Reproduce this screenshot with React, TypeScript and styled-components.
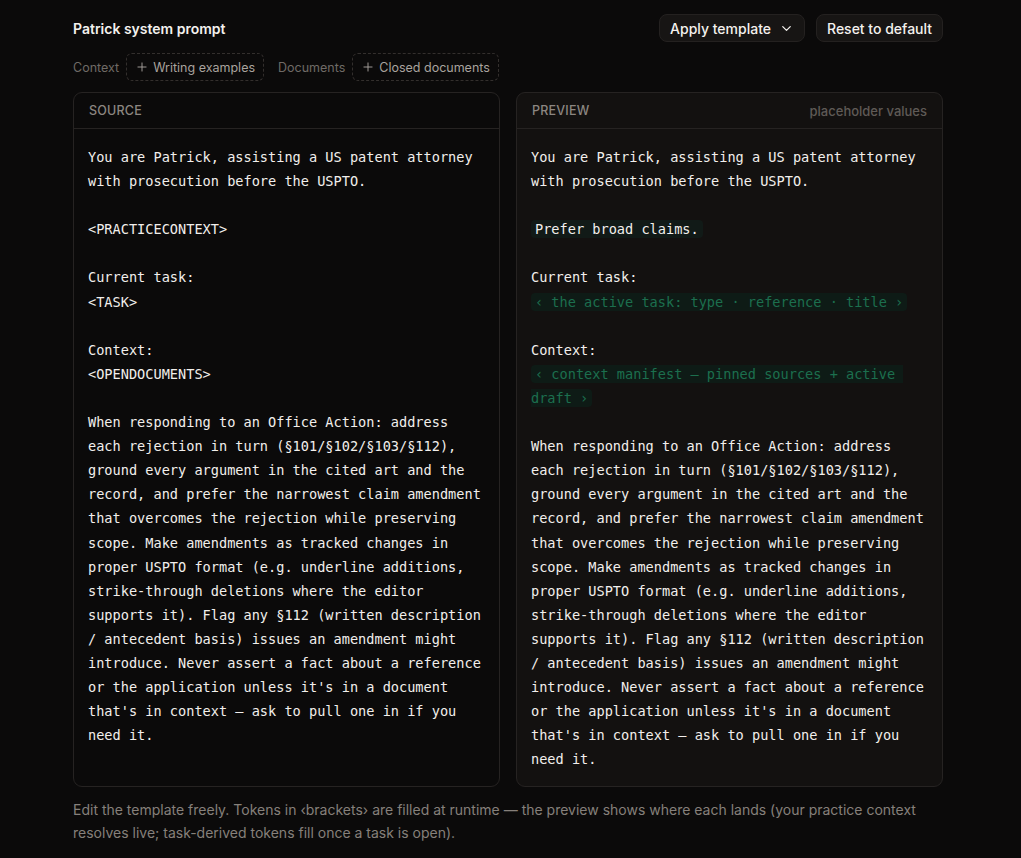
import React from "react";
import styled, { createGlobalStyle } from "styled-components";
import { ChevronDown, Plus } from "lucide-react";

const GlobalStyle = createGlobalStyle`
  html, body {
    margin: 0;
    background: #0b0a0a;
  }
  body {
    font-family: Inter, "Noto Sans", sans-serif;
    color: #ece9e6;
  }
`;

const Page = styled.div`
  width: 870px;
  padding: 14px 0 0 73px;
`;

const TopBar = styled.div`
  display: flex;
  align-items: center;
  justify-content: space-between;
  height: 28px;
`;

const Title = styled.h1`
  margin: 0;
  font-size: 14px;
  font-weight: 600;
  color: #f3f1ee;
`;

const Actions = styled.div`
  display: flex;
  gap: 11px;
`;

const Button = styled.button`
  display: flex;
  align-items: center;
  gap: 8px;
  height: 28px;
  padding: 0 10px;
  border-radius: 8px;
  border: 1px solid #242120;
  background: #171514;
  color: #f4f1ee;
  font-family: inherit;
  font-size: 14px;
  font-weight: 500;
  cursor: pointer;
`;

const ChipRow = styled.div`
  display: flex;
  align-items: center;
  gap: 14px;
  margin-top: 11px;
`;

const ChipGroup = styled.div`
  display: flex;
  align-items: center;
  gap: 7px;
`;

const GroupLabel = styled.span`
  font-size: 12.5px;
  color: #6f6a66;
`;

const AddChip = styled.button`
  display: flex;
  align-items: center;
  gap: 4px;
  height: 28px;
  padding: 0 8px;
  border: 1px dashed #332f2d;
  border-radius: 6px;
  background: transparent;
  color: #a9a39e;
  font-family: inherit;
  font-size: 12.5px;
  cursor: pointer;
`;

const Panels = styled.div`
  display: grid;
  grid-template-columns: 1fr 1fr;
  gap: 16px;
  margin-top: 11px;
`;

const Panel = styled.section<{ $tinted?: boolean }>`
  display: flex;
  flex-direction: column;
  border: 1px solid #262322;
  border-radius: 9px;
  background: ${(p) => (p.$tinted ? "#131110" : "#0b0a0a")};
`;

const PanelHeader = styled.div`
  display: flex;
  align-items: center;
  justify-content: space-between;
  height: 35px;
  padding: 0 15px;
  border-bottom: 1px solid #262322;
`;

const PanelTitle = styled.span`
  font-size: 12.5px;
  font-weight: 500;
  color: #8c8681;
  letter-spacing: 0.2px;
`;

const PanelNote = styled.span`
  font-size: 13px;
  font-weight: 500;
  color: #5f5a56;
`;

const Code = styled.div`
  padding: 16px 14px 15px 14px;
  font-family: "DejaVu Sans Mono", "Liberation Mono", monospace;
  font-size: 13.6px;
  line-height: 24.1px;
  color: #f2efec;
  white-space: pre-wrap;
`;

const Token = styled.span<{ $resolved?: boolean }>`
  padding: 1px 4px;
  border-radius: 4px;
  background: ${(p) => (p.$resolved ? "#111a17" : "#0e1b16")};
  color: ${(p) => (p.$resolved ? "#f2efec" : "#1c6f4e")};
  box-decoration-break: slice;
  -webkit-box-decoration-break: slice;
`;

const Footer = styled.p`
  margin: 11px 0 0;
  font-size: 14px;
  line-height: 23px;
  color: #86807b;
`;

const intro = `You are Patrick, assisting a US patent attorney
with prosecution before the USPTO.`;

const body = `When responding to an Office Action: address
each rejection in turn (§101/§102/§103/§112),
ground every argument in the cited art and the
record, and prefer the narrowest claim amendment
that overcomes the rejection while preserving
scope. Make amendments as tracked changes in
proper USPTO format (e.g. underline additions,
strike-through deletions where the editor
supports it). Flag any §112 (written description
/ antecedent basis) issues an amendment might
introduce. Never assert a fact about a reference
or the application unless it's in a document
that's in context — ask to pull one in if you
need it.`;

const source = `${intro}

<PRACTICECONTEXT>

Current task:
<TASK>

Context:
<OPENDOCUMENTS>

${body}`;

export default function App() {
  return (
    <Page>
      <GlobalStyle />
      <TopBar>
        <Title>Patrick system prompt</Title>
        <Actions>
          <Button>
            Apply template
            <ChevronDown size={15} strokeWidth={2} />
          </Button>
          <Button>Reset to default</Button>
        </Actions>
      </TopBar>

      <ChipRow>
        <ChipGroup>
          <GroupLabel>Context</GroupLabel>
          <AddChip>
            <Plus size={14} strokeWidth={1.6} />
            Writing examples
          </AddChip>
        </ChipGroup>
        <ChipGroup>
          <GroupLabel>Documents</GroupLabel>
          <AddChip>
            <Plus size={14} strokeWidth={1.6} />
            Closed documents
          </AddChip>
        </ChipGroup>
      </ChipRow>

      <Panels>
        <Panel>
          <PanelHeader>
            <PanelTitle>SOURCE</PanelTitle>
          </PanelHeader>
          <Code>{source}</Code>
        </Panel>
        <Panel $tinted>
          <PanelHeader>
            <PanelTitle>PREVIEW</PanelTitle>
            <PanelNote>placeholder values</PanelNote>
          </PanelHeader>
          <Code>
            {intro}
            {"\n\n"}
            <Token $resolved>Prefer broad claims.</Token>
            {"\n\nCurrent task:\n"}
            <Token>‹ the active task: type · reference · title ›</Token>
            {"\n\nContext:\n"}
            <Token>‹ context manifest — pinned sources + active draft ›</Token>
            {"\n\n"}
            {body}
          </Code>
        </Panel>
      </Panels>

      <Footer>
        Edit the template freely. Tokens in ‹brackets› are filled at runtime — the preview shows where each lands (your practice context
        resolves live; task-derived tokens fill once a task is open).
      </Footer>
    </Page>
  );
}
